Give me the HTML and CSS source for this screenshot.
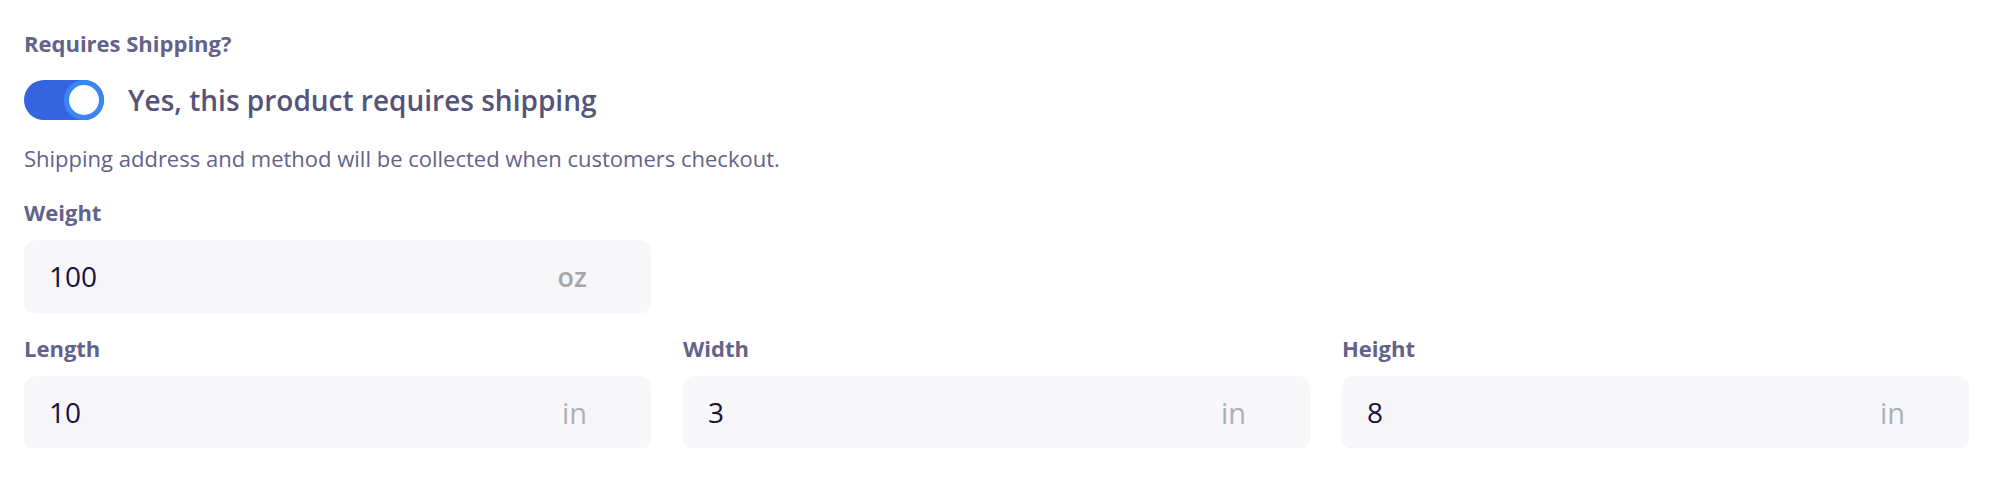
FILE: index.html
```html
<!DOCTYPE html>
<html lang="en">
<head>
<meta charset="UTF-8" />
<meta name="viewport" content="width=device-width, initial-scale=1" />
<title>Shipping</title>
<link rel="stylesheet" href="styles.css">
</head>
<body>

<div class="shipping">
  <div class="field-label">Requires Shipping?</div>
  <label class="toggle-row">
    <span class="switch"><span class="knob"></span></span>
    <span class="toggle-text">Yes, this product requires shipping</span>
  </label>
  <p class="hint">Shipping address and method will be collected when customers checkout.</p>

  <div class="grid">
    <div class="field">
      <div class="field-label">Weight</div>
      <div class="input"><span class="value">100</span><span class="unit unit-strong">oz</span></div>
    </div>
  </div>

  <div class="grid">
    <div class="field">
      <div class="field-label">Length</div>
      <div class="input"><span class="value">10</span><span class="unit">in</span></div>
    </div>
    <div class="field">
      <div class="field-label">Width</div>
      <div class="input"><span class="value">3</span><span class="unit">in</span></div>
    </div>
    <div class="field">
      <div class="field-label">Height</div>
      <div class="input"><span class="value">8</span><span class="unit">in</span></div>
    </div>
  </div>
</div>

</body>
</html>
```

FILE: styles.css
```css
body {
  margin: 0;
  background: #fff;
  font-family: "Open Sans", "Noto Sans", sans-serif;
}
.shipping {
  padding: 29px 0 0 24px;
  width: 1946px;
}
.field-label {
  font-size: 22px;
  line-height: 28px;
  font-weight: 700;
  color: #62628a;
}
.toggle-row {
  display: flex;
  align-items: center;
  gap: 24px;
  margin-top: 23px;
}
.switch {
  display: flex;
  justify-content: flex-end;
  width: 80px;
  height: 40px;
  border-radius: 20px;
  background: #3464e0;
}
.knob {
  width: 30px;
  height: 30px;
  border-radius: 50%;
  background: #fff;
  border: 5px solid #3b86f7;
}
.toggle-text {
  font-size: 28px;
  font-weight: 600;
  color: #545479;
}
.hint {
  margin: 23px 0 0;
  font-size: 22px;
  line-height: 30px;
  color: #62628a;
}
.grid {
  display: grid;
  grid-template-columns: repeat(3, 627px);
  column-gap: 32px;
  margin-top: 25px;
}
.grid + .grid {
  margin-top: 22px;
}
.field .field-label {
  margin-bottom: 14px;
}
.input {
  display: flex;
  align-items: center;
  justify-content: space-between;
  height: 72px;
  padding: 0 64px 0 25px;
  border-radius: 12px;
  background: #f7f7f9;
  box-shadow: 0 1px 2px rgba(20, 20, 60, 0.06);
}
.value {
  font-size: 28px;
  color: #15123e;
}
.unit {
  font-size: 29px;
  color: #aeaeb6;
}
.unit-strong {
  font-size: 27px;
  font-weight: 600;
  color: #a5a5ab;
}
```
